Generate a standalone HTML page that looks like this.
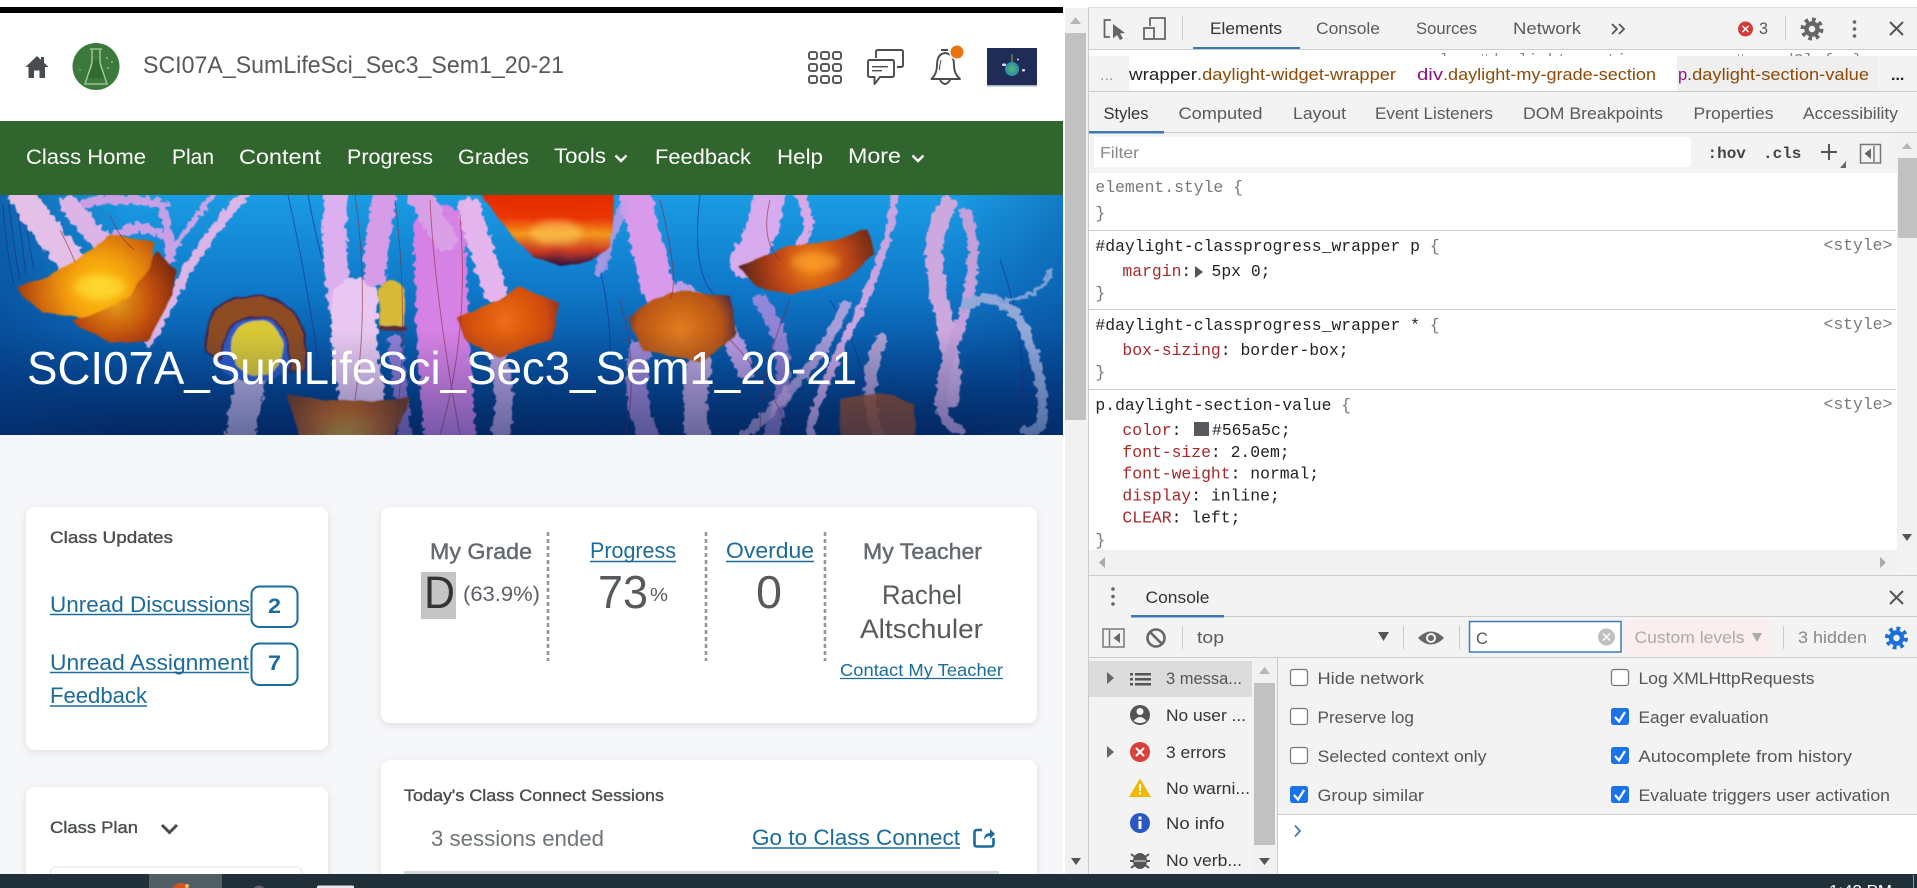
<!DOCTYPE html>
<html lang="en"><head><meta charset="utf-8"><title>SCI07A_SumLifeSci_Sec3_Sem1_20-21</title>
<style>
html,body{margin:0;padding:0;width:1917px;height:888px;overflow:hidden;background:#fff}
svg{display:block}
text{font-family:"Liberation Sans",sans-serif;white-space:pre}
.m{font-family:"Liberation Mono",monospace;font-size:16.4px;fill:#222}
.g{fill:#777}.r{fill:#a8282a}
.l{font-size:22px;fill:#1b6b9b}
.n{font-size:21px;fill:#fff}
.d{font-size:16.5px;fill:#5a5a5a}
.c{font-size:16.5px;fill:#555}
.h{font-size:17px;fill:#494c4e;stroke:#494c4e;stroke-width:.35px}
.u{stroke:#1b6b9b;stroke-width:1.6;fill:none}
.i{stroke:#666;stroke-width:1.8;fill:none}
</style></head><body>
<svg width="1917" height="888" viewBox="0 0 1917 888" xmlns="http://www.w3.org/2000/svg">
<defs>
<linearGradient id="sea" x1="0" y1="0" x2="0" y2="1"><stop offset="0" stop-color="#1a9ce4"/><stop offset=".4" stop-color="#0f78c8"/><stop offset=".72" stop-color="#07509e"/><stop offset="1" stop-color="#032a68"/></linearGradient>
<linearGradient id="side" x1="0" y1="0" x2="1" y2="0"><stop offset="0" stop-color="#06408c" stop-opacity=".6"/><stop offset=".12" stop-color="#06408c" stop-opacity="0"/><stop offset=".9" stop-color="#06408c" stop-opacity="0"/><stop offset="1" stop-color="#06408c" stop-opacity=".35"/></linearGradient>
<linearGradient id="bot" x1="0" y1="0" x2="0" y2="1"><stop offset="0" stop-color="#03265e" stop-opacity="0"/><stop offset="1" stop-color="#03265e" stop-opacity=".45"/></linearGradient>
<radialGradient id="ja" gradientUnits="userSpaceOnUse" cx="100" cy="288" r="85"><stop offset="0" stop-color="#fdc814"/><stop offset=".35" stop-color="#f5a30f"/><stop offset=".7" stop-color="#d26a0a"/><stop offset="1" stop-color="#9c3c08"/></radialGradient>
<radialGradient id="ja2" gradientUnits="userSpaceOnUse" cx="115" cy="300" r="65"><stop offset="0" stop-color="#e8a01a"/><stop offset=".6" stop-color="#c04c08"/><stop offset="1" stop-color="#7c2a08"/></radialGradient>
<linearGradient id="jb" gradientUnits="userSpaceOnUse" x1="0" y1="195" x2="0" y2="266"><stop offset="0" stop-color="#e42a04"/><stop offset=".32" stop-color="#ea3606"/><stop offset=".55" stop-color="#f29a1c"/><stop offset=".78" stop-color="#cc3c24"/><stop offset="1" stop-color="#241040"/></linearGradient>
<radialGradient id="jc" gradientUnits="userSpaceOnUse" cx="812" cy="264" r="72"><stop offset="0" stop-color="#f68a12"/><stop offset=".5" stop-color="#bd4612"/><stop offset="1" stop-color="#5c241c"/></radialGradient>
<radialGradient id="je" gradientUnits="userSpaceOnUse" cx="505" cy="320" r="60"><stop offset="0" stop-color="#ee6c12"/><stop offset=".7" stop-color="#cf4a10"/><stop offset="1" stop-color="#8a3020"/></radialGradient>
<radialGradient id="jf" gradientUnits="userSpaceOnUse" cx="680" cy="330" r="60"><stop offset="0" stop-color="#e47c1c"/><stop offset=".7" stop-color="#b85416"/><stop offset="1" stop-color="#4a2a40"/></radialGradient>
<radialGradient id="jg" gradientUnits="userSpaceOnUse" cx="345" cy="445" r="70"><stop offset="0" stop-color="#f4c030"/><stop offset=".55" stop-color="#cc6212"/><stop offset="1" stop-color="#7c3a1c"/></radialGradient>
<radialGradient id="earth"><stop offset="0" stop-color="#5ab86a"/><stop offset="1" stop-color="#2a8cb0"/></radialGradient>
<filter id="fz" x="-5%" y="-5%" width="110%" height="110%"><feTurbulence type="fractalNoise" baseFrequency=".16" numOctaves="2" seed="4"/><feDisplacementMap in="SourceGraphic" scale="9" xChannelSelector="R" yChannelSelector="G"/><feGaussianBlur stdDeviation=".5"/></filter>
<filter id="fz2" x="-5%" y="-5%" width="110%" height="110%"><feTurbulence type="fractalNoise" baseFrequency=".06" numOctaves="2" seed="9"/><feDisplacementMap in="SourceGraphic" scale="5" xChannelSelector="R" yChannelSelector="G"/><feGaussianBlur stdDeviation=".7"/></filter>
<filter id="b3" x="-40%" y="-40%" width="180%" height="180%"><feGaussianBlur stdDeviation="3.5"/></filter>
<filter id="sh" x="-10%" y="-10%" width="120%" height="125%"><feDropShadow dx="0" dy="2" stdDeviation="4" flood-color="#000" flood-opacity=".1"/></filter>
<clipPath id="bn"><rect x="0" y="195" width="1063" height="240"/></clipPath>
</defs>

<!-- page -->
<rect width="1917" height="888" fill="#fff"/>
<rect x="0" y="7" width="1063" height="6" fill="#000"/>
<rect x="0" y="121" width="1063" height="74" fill="#31652e"/>
<rect x="0" y="435" width="1063" height="440" fill="#f6f7f9"/>

<!-- banner -->
<g clip-path="url(#bn)">
<rect x="0" y="195" width="1063" height="240" fill="url(#sea)"/>
<rect x="0" y="195" width="1063" height="240" fill="url(#side)"/>
<g fill="none" stroke="#1c2a88" stroke-width="1" opacity=".6">
<path d="M3 205Q6 250 14 285M9 205Q14 250 20 280M16 200Q22 240 26 275M24 205Q28 240 34 270"/>
<path d="M288 195Q305 270 318 360M308 195Q320 260 335 300M600 270Q620 350 600 435M700 195Q690 280 720 300M830 300Q880 380 860 435M1000 260Q1030 340 1020 435M160 345Q190 400 175 435M540 360Q560 400 540 435M200 400Q180 420 170 435M220 395Q200 420 190 435"/>
</g>
<!-- pale tentacles -->
<g fill="none" stroke-linecap="round" filter="url(#fz)">
<path d="M20 190Q40 225 72 262" stroke="#e4bfe8" stroke-width="28"/>
<path d="M70 205Q85 225 100 240" stroke="#dcb4e6" stroke-width="20"/>
<path d="M85 203Q125 195 165 205M110 240Q140 215 168 240M160 205Q172 225 170 260" stroke="#c9a0e6" stroke-width="9"/>
<path d="M245 193Q205 240 192 262T150 342" stroke="#dbb4e8" stroke-width="10"/>
<path d="M215 193Q190 225 172 250" stroke="#c8a4e4" stroke-width="6"/>
<path d="M336 195Q332 250 340 305" stroke="#dcb0ee" stroke-width="24"/>
<path d="M356 300Q350 340 362 395" stroke="#e8c8f0" stroke-width="46"/>
<path d="M385 200Q375 240 375 275" stroke="#d69ce8" stroke-width="24"/>
<path d="M440 230Q440 330 450 435" stroke="#d681e4" stroke-width="52"/>
<path d="M420 195Q430 215 445 240" stroke="#d9a0e8" stroke-width="24"/>
<path d="M470 210Q480 250 495 290" stroke="#e3b5ec" stroke-width="24"/>
<path d="M395 340Q400 385 405 435" stroke="#c98be6" stroke-width="14" opacity=".7"/>
<path d="M250 382Q245 410 238 440" stroke="#d6bce8" stroke-width="30" opacity=".85"/>
<path d="M495 350Q510 390 500 435" stroke="#e5b5ee" stroke-width="18" opacity=".8"/>
<path d="M635 195Q645 240 660 295" stroke="#d99aec" stroke-width="32"/>
<path d="M600 270Q612 230 625 205" stroke="#c89ce8" stroke-width="10" opacity=".8"/>
<path d="M680 290Q730 320 745 370" stroke="#d6a4ec" stroke-width="18" opacity=".85"/>
<path d="M640 350Q630 400 650 440" stroke="#d29ae4" stroke-width="22" opacity=".75"/>
<path d="M700 365Q690 400 700 440" stroke="#e8b8e8" stroke-width="24" opacity=".8"/>
<path d="M770 190Q768 225 745 262" stroke="#d8aaee" stroke-width="32"/>
<path d="M800 195Q815 225 800 245" stroke="#d8a8e8" stroke-width="10"/>
<path d="M895 195Q890 250 850 330T810 435" stroke="#caa4e0" stroke-width="8"/>
<path d="M760 300Q800 350 770 440" stroke="#c890e4" stroke-width="14" opacity=".7"/>
<path d="M845 305Q820 370 740 440" stroke="#dab0e6" stroke-width="10" opacity=".75"/>
<path d="M880 340Q860 395 880 440" stroke="#d8b0dc" stroke-width="12" opacity=".8"/>
<path d="M948 205Q925 240 940 300T950 400" stroke="#cca8de" stroke-width="18"/>
<path d="M965 212Q985 260 955 340T960 430" stroke="#c4a0da" stroke-width="11"/>
<path d="M965 305Q1015 280 1035 360T1025 430" stroke="#92a8d8" stroke-width="10"/>
<path d="M1000 300Q1040 300 1052 270" stroke="#7ea0d8" stroke-width="4"/>
</g>
<!-- bells -->
<g filter="url(#fz2)">
<path d="M73 322L110 342 147 342 173 295 177 272 157 252 120 290Z" fill="url(#ja2)"/>
<path d="M17 288L50 275 80 258 110 235 155 242 150 268 127 298 83 318 43 312 23 298Z" fill="url(#ja)"/>
<path d="M478 190H614L611 247 590 262 560 266 535 258 512 237Z" fill="url(#jb)"/>
<path d="M737 267L785 247 830 240 867 230 875 253 846 280 792 295 758 287Z" fill="url(#jc)"/>
<path d="M457 318L500 300 519 287 560 303 552 340 498 357 464 340Z" fill="url(#je)"/>
<path d="M628 320Q640 300 683 290L730 297 737 333 703 363 642 350Z" fill="url(#jf)"/>
<path d="M287 395Q350 405 410 398L393 440H300Z" fill="url(#jg)"/>
<path d="M378 290Q392 270 405 290L405 325 380 328Z" fill="#d8b838"/>
<path d="M380 328H407" stroke="#5a2a3a" stroke-width="5"/>
<path d="M840 400Q880 385 915 405V440H840Z" fill="#a24c20" opacity=".85"/>
<ellipse cx="255" cy="340" rx="46" ry="42" fill="#2f5cc8"/>
<path d="M207 352Q200 296 255 296Q310 296 306 370L290 372Q292 314 255 317Q222 318 222 360Z" fill="#8e4c22" stroke="#3a2050" stroke-width="2"/>
<ellipse cx="257" cy="348" rx="26" ry="28" fill="#d9c836"/>
</g>
<g fill="none" stroke="#8a2430" stroke-width="1" opacity=".55">
<path d="M355 195Q370 300 355 400M395 200Q410 320 395 435M430 200Q435 300 460 435M460 215Q470 330 440 435M660 200Q680 280 670 300M770 200Q760 240 780 260M620 300Q640 370 625 435M730 340Q770 380 790 435M790 300Q760 370 760 435M60 230Q68 245 75 262M110 215Q120 240 135 250"/>
</g>
<rect x="0" y="330" width="1063" height="105" fill="url(#bot)"/>
<g filter="url(#b3)" opacity=".55"><ellipse cx="556" cy="233" rx="26" ry="12" fill="#ffd060"/><ellipse cx="100" cy="287" rx="26" ry="12" fill="#ffe640"/><ellipse cx="815" cy="262" rx="24" ry="9" fill="#ffa830"/></g>
</g>
<text x="27" y="384" font-size="46" fill="#fff" textLength="830" lengthAdjust="spacingAndGlyphs">SCI07A_SumLifeSci_Sec3_Sem1_20-21</text>

<!-- header -->
<path d="M37 56L48.5 67H45V78H39.5V70.5H34V78H28.5V67H25.5Z" fill="#494c4e"/>
<rect x="41" y="57" width="3" height="6" fill="#494c4e"/>
<circle cx="96" cy="66.5" r="23.5" fill="#3b7a3b"/>
<path d="M87.5 78L92.5 67V60.5H99.5V67L106 78Z" fill="#2f662f" opacity=".8"/>
<path d="M90 49H102M92 49V63L85 84H107L100 63V49" fill="none" stroke="#a9cda5" stroke-width="1.3"/>
<circle cx="107" cy="58" r="1" fill="#8cb98a"/><circle cx="112" cy="62" r="1" fill="#8cb98a"/><circle cx="108" cy="68" r="1" fill="#8cb98a"/><circle cx="80" cy="70" r="1" fill="#6fa36d"/>
<text x="143" y="73" font-size="24" fill="#565a5c" textLength="421" lengthAdjust="spacingAndGlyphs">SCI07A_SumLifeSci_Sec3_Sem1_20-21</text>

<g fill="none" stroke="#565a5c" stroke-width="2">
<rect x="809" y="52" width="8" height="7" rx="2"/><rect x="821" y="52" width="8" height="7" rx="2"/><rect x="833" y="52" width="8" height="7" rx="2"/>
<rect x="809" y="64" width="8" height="7" rx="2"/><rect x="821" y="64" width="8" height="7" rx="2"/><rect x="833" y="64" width="8" height="7" rx="2"/>
<rect x="809" y="76" width="8" height="7" rx="2"/><rect x="821" y="76" width="8" height="7" rx="2"/><rect x="833" y="76" width="8" height="7" rx="2"/>
</g>
<g fill="none" stroke="#494c4e" stroke-width="1.9" stroke-linejoin="round">
<path d="M876 58V52Q876 50 878 50H901Q903 50 903 52V65Q903 67 901 67H897"/>
<path d="M870 60H892Q894 60 894 62V75Q894 77 892 77H880L874.5 84V77H870Q868 77 868 75V62Q868 60 870 60Z"/>
<path d="M872 66.7H888M872 70.7H882" stroke-width="1.3"/>
<path d="M931.5 79Q937 74 937 65Q937 54 945 53Q954 54 954 65Q954 74 960 79Z"/>
<path d="M941 50H948M940 80Q945 88 950 80"/>
<path d="M941 60Q939.5 66 939.5 70" stroke-width="1"/>
</g>
<circle cx="957" cy="52" r="8" fill="#fff"/><circle cx="957" cy="52" r="6.5" fill="#e87511"/>
<rect x="987" y="48" width="50" height="37" fill="#1f2c56"/><rect x="987" y="85" width="50" height="1.5" fill="#a3aec6"/>
<circle cx="1012" cy="69" r="7" fill="url(#earth)"/><rect x="1002" y="63.5" width="4" height="2.5" rx="1" fill="#dde"/><rect x="1022" y="69" width="3" height="2.5" rx="1" fill="#dde"/><rect x="1011" y="54" width="2" height="8" fill="#4d6d55"/><circle cx="1018" cy="59.5" r="1" fill="#cdd"/>

<!-- nav -->
<g>
<text class="n" x="26" y="164" textLength="120" lengthAdjust="spacingAndGlyphs">Class Home</text>
<text class="n" x="172" y="164" textLength="42" lengthAdjust="spacingAndGlyphs">Plan</text>
<text class="n" x="239" y="164" textLength="82" lengthAdjust="spacingAndGlyphs">Content</text>
<text class="n" x="347" y="164" textLength="86" lengthAdjust="spacingAndGlyphs">Progress</text>
<text class="n" x="458" y="164" textLength="71" lengthAdjust="spacingAndGlyphs">Grades</text>
<text class="n" x="554" y="163" textLength="52" lengthAdjust="spacingAndGlyphs">Tools</text>
<text class="n" x="655" y="164" textLength="96" lengthAdjust="spacingAndGlyphs">Feedback</text>
<text class="n" x="777" y="164" textLength="46" lengthAdjust="spacingAndGlyphs">Help</text>
<text class="n" x="848" y="163" textLength="53" lengthAdjust="spacingAndGlyphs">More</text>
<path d="M615.5 155.5L621 161 626.5 155.5M912.5 155.5L918 161 923.5 155.5" fill="none" stroke="#fff" stroke-width="2.4"/>
</g>

<!-- cards -->
<g filter="url(#sh)"><rect x="26" y="507" width="302" height="243" rx="9" fill="#fff"/>
<rect x="26" y="787" width="302" height="100" rx="9" fill="#fff"/>
<rect x="381" y="507" width="656" height="216" rx="9" fill="#fff"/>
<rect x="381" y="760" width="656" height="130" rx="9" fill="#fff"/></g>
<text class="h" x="50" y="543" textLength="123" lengthAdjust="spacingAndGlyphs">Class Updates</text>
<text class="l" x="50" y="612" textLength="200" lengthAdjust="spacingAndGlyphs">Unread Discussions</text>
<path class="u" d="M50 614.5H250"/>
<rect x="251.5" y="586.5" width="46" height="40.5" rx="8" fill="#fff" stroke="#1b6b9b" stroke-width="2"/>
<text x="268" y="613" font-size="21" font-weight="bold" fill="#1b6b9b" textLength="13" lengthAdjust="spacingAndGlyphs">2</text>
<text class="l" x="50" y="670" textLength="199" lengthAdjust="spacingAndGlyphs">Unread Assignment</text>
<path class="u" d="M50 672.5H249"/>
<rect x="251.5" y="643.5" width="46" height="41.5" rx="8" fill="#fff" stroke="#1b6b9b" stroke-width="2"/>
<text x="268" y="670" font-size="21" font-weight="bold" fill="#1b6b9b" textLength="13" lengthAdjust="spacingAndGlyphs">7</text>
<text class="l" x="50" y="703" textLength="97" lengthAdjust="spacingAndGlyphs">Feedback</text>
<path class="u" d="M50 706H147"/>

<text class="h" x="50" y="833" textLength="88" lengthAdjust="spacingAndGlyphs">Class Plan</text>
<path d="M162 825L169.500 832.5 177 825" fill="none" stroke="#494c4e" stroke-width="3"/>
<path d="M50.5 875V873Q50.5 867 57 867H296Q302 867 302 873V875" fill="none" stroke="#e6e8ea" stroke-width="1.2"/>

<!-- progress -->
<text x="430" y="559" font-size="22.5" fill="#646a70" stroke="#646a70" stroke-width=".45" textLength="102" lengthAdjust="spacingAndGlyphs">My Grade</text>
<rect x="421" y="572" width="35" height="47" fill="#c5c5c5"/>
<text x="424" y="608" font-size="45" fill="#333" textLength="31" lengthAdjust="spacingAndGlyphs">D</text>
<text x="463" y="601" font-size="21" fill="#5d6166" textLength="77" lengthAdjust="spacingAndGlyphs">(63.9%)</text>
<path d="M548 532V661M706 532V661M825 532V661" stroke="#8b98a3" stroke-width="2.6" stroke-dasharray="4 3"/>
<text class="l" x="590" y="558" textLength="86" lengthAdjust="spacingAndGlyphs">Progress</text>
<path class="u" d="M590 561.5H676"/>
<text x="598" y="608" font-size="46" fill="#565a5c" textLength="50" lengthAdjust="spacingAndGlyphs">73</text>
<text x="650" y="601" font-size="18" fill="#565a5c" textLength="18" lengthAdjust="spacingAndGlyphs">%</text>
<text class="l" x="726" y="558" textLength="88" lengthAdjust="spacingAndGlyphs">Overdue</text>
<path class="u" d="M726 561.5H814"/>
<text x="756" y="608" font-size="46" fill="#565a5c" textLength="26" lengthAdjust="spacingAndGlyphs">0</text>
<text x="863" y="559" font-size="22.5" fill="#646a70" stroke="#646a70" stroke-width=".45" textLength="119" lengthAdjust="spacingAndGlyphs">My Teacher</text>
<text x="882" y="604" font-size="26.5" fill="#565a5c" textLength="80" lengthAdjust="spacingAndGlyphs">Rachel</text>
<text x="860" y="638" font-size="26.5" fill="#565a5c" textLength="123" lengthAdjust="spacingAndGlyphs">Altschuler</text>
<text x="840" y="676" font-size="17.5" fill="#1b6b9b" textLength="163" lengthAdjust="spacingAndGlyphs">Contact My Teacher</text>
<path d="M840 678.5H1003" stroke="#1b6b9b" stroke-width="1.2"/>

<!-- class connect -->
<text class="h" x="404" y="801" textLength="260" lengthAdjust="spacingAndGlyphs">Today's Class Connect Sessions</text>
<text x="431" y="846" font-size="22" fill="#6e7477" textLength="173" lengthAdjust="spacingAndGlyphs">3 sessions ended</text>
<text class="l" x="752" y="845" textLength="208" lengthAdjust="spacingAndGlyphs">Go to Class Connect</text>
<path class="u" d="M752 848H960"/>
<path d="M982 830H977Q974.5 830 974.5 832.5V844Q974.5 846.5 977 846.5H991Q993.5 846.5 993.5 844V838" fill="none" stroke="#1b6b9b" stroke-width="2.6"/>
<path d="M984 840Q984 833 990 833V829L995 834 990 839V836Q986 836 984 840Z" fill="#1b6b9b"/>
<rect x="404" y="871" width="595" height="4" fill="#d3d9d5"/>

<!-- page scrollbar -->
<rect x="1065" y="8" width="23" height="867" fill="#f1f1f1"/>
<rect x="1065" y="33" width="21" height="387" fill="#c1c1c1"/>
<path d="M1070 24L1075.5 17 1081 24Z" fill="#b5b5b5"/>
<path d="M1071 858H1081L1076 865Z" fill="#555"/>

<!-- devtools -->
<rect x="1088" y="8" width="829" height="867" fill="#f3f3f3"/>
<rect x="1088" y="7" width="829" height="1" fill="#ddd"/>
<rect x="1088" y="8" width="1" height="867" fill="#ccc"/>

<path class="i" d="M1111 20H1104.5V37H1110"/>
<path d="M1113 24V38.5L1117 35 1120 40 1123 38.5 1120 33.5 1125 33Z" fill="#666"/>
<path class="i" d="M1150 26V19Q1150 18 1151 18H1165V39H1155"/>
<rect x="1144" y="28" width="10" height="11" fill="none" stroke="#666" stroke-width="1.8"/>
<path d="M1182.5 16V40" stroke="#ccc"/>
<text class="d" x="1210" y="34" style="fill:#333" textLength="72" lengthAdjust="spacingAndGlyphs">Elements</text>
<text class="d" x="1316" y="34" textLength="64" lengthAdjust="spacingAndGlyphs">Console</text>
<text class="d" x="1416" y="34" textLength="61" lengthAdjust="spacingAndGlyphs">Sources</text>
<text class="d" x="1513" y="34" textLength="68" lengthAdjust="spacingAndGlyphs">Network</text>
<path d="M1612 24L1617 29 1612 34M1619 24L1624 29 1619 34" fill="none" stroke="#555" stroke-width="1.8"/>
<rect x="1193" y="47" width="107" height="2.5" fill="#3f78b4"/>
<rect x="1088" y="49" width="829" height="1" fill="#ccc"/>
<circle cx="1745.5" cy="29" r="7.5" fill="#d33a3a"/><path d="M1742.5 26L1748.5 32M1748.5 26L1742.5 32" stroke="#fff" stroke-width="1.5"/>
<text class="d" x="1759" y="34" textLength="9" lengthAdjust="spacingAndGlyphs">3</text>
<path d="M1785.5 16V40" stroke="#ccc"/>
<circle cx="1812" cy="29" r="9.5" fill="none" stroke="#666" stroke-width="4" stroke-dasharray="3.7 3.7"/>
<circle cx="1812" cy="29" r="5.500" fill="none" stroke="#666" stroke-width="4.5"/>
<circle cx="1854.5" cy="22" r="1.8" fill="#666"/><circle cx="1854.5" cy="29" r="1.8" fill="#666"/><circle cx="1854.5" cy="36" r="1.8" fill="#666"/>
<path d="M1890 22L1903 35M1903 22L1890 35" stroke="#555" stroke-width="2"/>

<!-- clipped code line -->
<rect x="1089" y="50" width="828" height="7" fill="#fff"/>
<text class="m" x="1410" y="65" style="fill:#888">. ol   #daylight-section_wrapper #  p.d2l {  }</text>
<rect x="1089" y="56" width="828" height="35" fill="#f3f3f3"/>
<rect x="1129" y="56" width="548" height="35" fill="#fff"/>
<rect x="1678" y="56" width="200" height="35" fill="#efefef"/>
<rect x="1089" y="91" width="828" height="1" fill="#ccc"/>
<text x="1100" y="80" font-size="16" fill="#999">...</text>
<text x="1129" y="80" font-size="16.5" fill="#222" textLength="68" lengthAdjust="spacingAndGlyphs">wrapper</text>
<text x="1197" y="80" font-size="16.5" fill="#8d4a08" textLength="199" lengthAdjust="spacingAndGlyphs">.daylight-widget-wrapper</text>
<text x="1417" y="80" font-size="16.5" fill="#881280" textLength="26" lengthAdjust="spacingAndGlyphs">div</text>
<text x="1443" y="80" font-size="16.5" fill="#8d4a08" textLength="213" lengthAdjust="spacingAndGlyphs">.daylight-my-grade-section</text>
<text x="1678" y="80" font-size="16.5" fill="#881280">p</text>
<text x="1687" y="80" font-size="16.5" fill="#8d4a08" textLength="182" lengthAdjust="spacingAndGlyphs">.daylight-section-value</text>
<text x="1891" y="80" font-size="16" font-weight="bold" fill="#222">...</text>

<text class="d" x="1103.5" y="119" style="fill:#333" textLength="45" lengthAdjust="spacingAndGlyphs">Styles</text>
<text class="d" x="1178.5" y="119" textLength="84" lengthAdjust="spacingAndGlyphs">Computed</text>
<text class="d" x="1293" y="119" textLength="53" lengthAdjust="spacingAndGlyphs">Layout</text>
<text class="d" x="1375" y="119" textLength="118" lengthAdjust="spacingAndGlyphs">Event Listeners</text>
<text class="d" x="1523" y="119" textLength="140" lengthAdjust="spacingAndGlyphs">DOM Breakpoints</text>
<text class="d" x="1693.5" y="119" textLength="80" lengthAdjust="spacingAndGlyphs">Properties</text>
<text class="d" x="1803" y="119" textLength="95" lengthAdjust="spacingAndGlyphs">Accessibility</text>
<rect x="1089" y="131" width="75" height="2.5" fill="#3f78b4"/>
<rect x="1164" y="132" width="753" height="1" fill="#ccc"/>
<rect x="1094" y="137" width="597" height="30" fill="#fff"/>
<text x="1100" y="158" font-size="16" fill="#888" textLength="39" lengthAdjust="spacingAndGlyphs">Filter</text>
<text class="m" x="1707.5" y="158" font-weight="bold" style="font-size:16px;fill:#444">:hov</text>
<text class="m" x="1763" y="158" font-weight="bold" style="font-size:16px;fill:#444">.cls</text>
<path d="M1829 144V160M1821 152H1837" stroke="#555" stroke-width="2"/>
<path d="M1846 161V168H1840Z" fill="#666"/>
<rect x="1860.5" y="144.5" width="20" height="18.5" fill="none" stroke="#777" stroke-width="1.5"/>
<path d="M1874 146V162" stroke="#777" stroke-width="1.5"/><path d="M1871 148.5V159L1864.5 153.5Z" fill="#666"/>

<!-- styles pane -->
<rect x="1089" y="173" width="808" height="377" fill="#fff"/>
<rect x="1897" y="133" width="20" height="417" fill="#f1f1f1"/>
<rect x="1898" y="158" width="19" height="80" fill="#c1c1c1"/>
<path d="M1902 149L1907 143 1912 149Z" fill="#b5b5b5"/>
<path d="M1902 534H1912L1907 541Z" fill="#555"/>
<path d="M1089 230.5H1896M1089 309.5H1896M1089 389.5H1896" stroke="#ccc"/>

<text class="m g" x="1095.4" y="192">element.style {</text>
<text class="m g" x="1095.4" y="218">}</text>
<text class="m" x="1095.4" y="251">#daylight-classprogress_wrapper p <tspan class="g">{</tspan></text>
<text class="m r" x="1122.4" y="276">margin<tspan style="fill:#222">:</tspan></text>
<path d="M1195 266V278L1203 272Z" fill="#555"/>
<text class="m" x="1211.5" y="276">5px 0;</text>
<text class="m g" x="1095.4" y="298">}</text>
<text class="m" x="1095.4" y="330">#daylight-classprogress_wrapper * <tspan class="g">{</tspan></text>
<text class="m r" x="1122.4" y="355">box-sizing<tspan style="fill:#222">: border-box;</tspan></text>
<text class="m g" x="1095.4" y="377">}</text>
<text class="m" x="1095.4" y="410">p.daylight-section-value <tspan class="g">{</tspan></text>
<text class="m r" x="1122.4" y="435">color<tspan style="fill:#222">:</tspan></text>
<rect x="1194" y="422" width="15" height="14" fill="#565a5c"/>
<text class="m" x="1212" y="435">#565a5c;</text>
<text class="m r" x="1122.4" y="457">font-size<tspan style="fill:#222">: 2.0em;</tspan></text>
<text class="m r" x="1122.4" y="478.5">font-weight<tspan style="fill:#222">: normal;</tspan></text>
<text class="m r" x="1122.4" y="500.5">display<tspan style="fill:#222">: inline;</tspan></text>
<text class="m r" x="1122.4" y="522.5">CLEAR<tspan style="fill:#222">: left;</tspan></text>
<text class="m g" x="1095.4" y="545">}</text>
<text class="m g" x="1823.5" y="250">&lt;style&gt;</text>
<text class="m g" x="1823.5" y="329">&lt;style&gt;</text>
<text class="m g" x="1823.5" y="409">&lt;style&gt;</text>

<rect x="1089" y="550" width="808" height="25" fill="#f1f1f1"/>
<path d="M1105 557V568L1099 562.5Z" fill="#aaa"/><path d="M1880 557V568L1886 562.5Z" fill="#aaa"/>
<rect x="1089" y="575" width="828" height="1" fill="#ccc"/>

<!-- drawer -->
<circle cx="1113" cy="589" r="1.8" fill="#666"/><circle cx="1113" cy="596.5" r="1.8" fill="#666"/><circle cx="1113" cy="604" r="1.8" fill="#666"/>
<text class="d" x="1145.5" y="603" style="fill:#333" textLength="64" lengthAdjust="spacingAndGlyphs">Console</text>
<rect x="1131" y="615" width="93" height="2.5" fill="#3f78b4"/>
<rect x="1224" y="616" width="693" height="1" fill="#ccc"/>
<path d="M1890 591L1903 604M1903 591L1890 604" stroke="#555" stroke-width="2"/>

<rect x="1103" y="629" width="21" height="18" fill="none" stroke="#777" stroke-width="1.5"/><path d="M1109.5 630V646" stroke="#777" stroke-width="1.5"/><path d="M1120 633V643L1113.5 638Z" fill="#666"/>
<circle cx="1156" cy="638" r="8.5" fill="none" stroke="#666" stroke-width="2.6"/><path d="M1150 632L1162 644" stroke="#666" stroke-width="2.6"/>
<path d="M1182.5 626V649M1403.5 626V649M1459.5 626V649M1783.5 626V649" stroke="#ccc"/>
<text class="d" x="1197" y="643" textLength="27" lengthAdjust="spacingAndGlyphs">top</text>
<path d="M1378 632H1389L1383.5 641Z" fill="#555"/>
<path d="M1418 638Q1431 625 1444 638Q1431 651 1418 638Z" fill="#666"/><circle cx="1431" cy="638" r="5" fill="#f3f3f3"/><circle cx="1431" cy="638" r="3" fill="#666"/>
<rect x="1469.5" y="621.5" width="151.5" height="30.5" fill="#fff" stroke="#3f78b4" stroke-width="1.5"/>
<text x="1476" y="644" font-size="16.5" fill="#555">C</text>
<circle cx="1606.5" cy="637" r="8.5" fill="#c0c0c0"/><path d="M1603 633.5L1610 640.5M1610 633.5L1603 640.5" stroke="#fff" stroke-width="1.5"/>
<rect x="1626" y="620" width="144" height="35" fill="#fbeeee"/>
<text class="d" x="1634.5" y="643" style="fill:#aaa" textLength="110" lengthAdjust="spacingAndGlyphs">Custom levels</text>
<path d="M1752 633H1762L1757 642Z" fill="#aaa"/>
<text class="d" x="1798" y="643" style="fill:#888" textLength="69" lengthAdjust="spacingAndGlyphs">3 hidden</text>
<circle cx="1896.5" cy="638" r="9.5" fill="none" stroke="#1a6fd8" stroke-width="4" stroke-dasharray="3.7 3.7"/>
<circle cx="1896.5" cy="638" r="5.5" fill="none" stroke="#1a6fd8" stroke-width="4.5"/>
<rect x="1089" y="657" width="828" height="1" fill="#ccc"/>

<!-- sidebar -->
<rect x="1089" y="661" width="163" height="36" fill="#dcdcdc"/>
<rect x="1277" y="658" width="1" height="217" fill="#ccc"/>
<rect x="1253" y="658" width="24" height="217" fill="#f1f1f1"/>
<rect x="1254" y="683" width="21" height="162" fill="#c1c1c1"/>
<path d="M1259 674L1264.5 667 1270 674Z" fill="#b5b5b5"/>
<path d="M1259 858H1270L1264.5 865Z" fill="#555"/>
<path d="M1107 672V684L1114 678ZM1107 746V758L1114 752Z" fill="#666"/>
<g fill="#555"><rect x="1130" y="673" width="3" height="2.5"/><rect x="1135" y="673" width="16" height="2.5"/><rect x="1130" y="678" width="3" height="2.5"/><rect x="1135" y="678" width="16" height="2.5"/><rect x="1130" y="683" width="3" height="2.5"/><rect x="1135" y="683" width="16" height="2.5"/></g>
<circle cx="1140" cy="715" r="10" fill="#555"/><circle cx="1140" cy="711.5" r="3.5" fill="#f3f3f3"/><path d="M1133.5 721Q1140 713 1146.5 721Q1140 725 1133.5 721Z" fill="#f3f3f3"/>
<circle cx="1140" cy="752" r="10" fill="#d9403f"/><path d="M1136 748L1144 756M1144 748L1136 756" stroke="#fff" stroke-width="2"/>
<path d="M1140 778.5L1151 797H1129Z" fill="#f2b705"/><rect x="1139" y="784" width="2" height="7" fill="#fff"/><rect x="1139" y="792.5" width="2" height="2" fill="#fff"/>
<circle cx="1140" cy="823" r="10" fill="#2a56c6"/><rect x="1138.5" y="821" width="3" height="8" fill="#fff"/><rect x="1138.5" y="816.5" width="3" height="3" fill="#fff"/>
<ellipse cx="1140" cy="861" rx="7" ry="8" fill="#555"/><path d="M1131 854L1149 868M1149 854L1131 868M1130 861H1150" stroke="#555" stroke-width="2"/><path d="M1134 861H1146" stroke="#f3f3f3" stroke-width="1"/>
<text class="c" x="1166" y="684" textLength="76" lengthAdjust="spacingAndGlyphs">3 messa...</text>
<text class="c" x="1166" y="721" style="fill:#333" textLength="80" lengthAdjust="spacingAndGlyphs">No user ...</text>
<text class="c" x="1166" y="758" style="fill:#333" textLength="60" lengthAdjust="spacingAndGlyphs">3 errors</text>
<text class="c" x="1166" y="794" style="fill:#333" textLength="84" lengthAdjust="spacingAndGlyphs">No warni...</text>
<text class="c" x="1166" y="829" style="fill:#333" textLength="58.5" lengthAdjust="spacingAndGlyphs">No info</text>
<text class="c" x="1166" y="866" style="fill:#333" textLength="76" lengthAdjust="spacingAndGlyphs">No verb...</text>

<!-- settings -->
<rect x="1278" y="814" width="639" height="60" fill="#fff"/>
<rect x="1278" y="814" width="639" height="1" fill="#ccc"/>
<g fill="#fff" stroke="#767676" stroke-width="1.2">
<rect x="1290.5" y="669.5" width="17" height="16" rx="2.5"/><rect x="1290.5" y="708.5" width="17" height="16" rx="2.5"/><rect x="1290.5" y="747.5" width="17" height="16" rx="2.5"/><rect x="1611.5" y="669.5" width="17" height="16" rx="2.5"/>
</g>
<g fill="#1a73e8">
<rect x="1290" y="786" width="18" height="17" rx="2.5"/><rect x="1611" y="708" width="18" height="17" rx="2.5"/><rect x="1611" y="747" width="18" height="17" rx="2.5"/><rect x="1611" y="786" width="18" height="17" rx="2.5"/>
</g>
<g fill="none" stroke="#fff" stroke-width="2.2">
<path d="M1294 795L1298 799.5 1304 790"/><path d="M1615 717L1619 721.5 1625 712"/><path d="M1615 756L1619 760.5 1625 751"/><path d="M1615 795L1619 799.5 1625 790"/>
</g>
<text class="c" x="1317.5" y="684" textLength="106.5" lengthAdjust="spacingAndGlyphs">Hide network</text>
<text class="c" x="1317.5" y="723" textLength="96.5" lengthAdjust="spacingAndGlyphs">Preserve log</text>
<text class="c" x="1317.5" y="762" textLength="169" lengthAdjust="spacingAndGlyphs">Selected context only</text>
<text class="c" x="1317.5" y="801" textLength="106.5" lengthAdjust="spacingAndGlyphs">Group similar</text>
<text class="c" x="1638.5" y="684" textLength="176" lengthAdjust="spacingAndGlyphs">Log XMLHttpRequests</text>
<text class="c" x="1638.5" y="723" textLength="130" lengthAdjust="spacingAndGlyphs">Eager evaluation</text>
<text class="c" x="1638.5" y="762" textLength="213.5" lengthAdjust="spacingAndGlyphs">Autocomplete from history</text>
<text class="c" x="1638.5" y="801" textLength="251.5" lengthAdjust="spacingAndGlyphs">Evaluate triggers user activation</text>
<path d="M1295 825.5L1300 831 1295 836.5" fill="none" stroke="#3f78b4" stroke-width="1.8"/>

<!-- taskbar -->
<rect x="0" y="874" width="1917" height="14" fill="#1f3039"/>
<rect x="149" y="874" width="73" height="14" fill="#515e65"/>
<circle cx="181" cy="892" r="9" fill="#d4541e"/><circle cx="187" cy="886" r="2" fill="#f0c060"/>
<circle cx="259" cy="892" r="6.5" fill="#645d6e"/>
<rect x="317" y="885.5" width="37" height="4" rx="1.5" fill="#e8e8e8"/>
<rect x="1913" y="875" width="1" height="13" fill="#8a979e"/>
<text x="1829" y="896" font-size="16" fill="#fff" textLength="63" lengthAdjust="spacingAndGlyphs">1:43 PM</text>
</svg>
</body></html>
